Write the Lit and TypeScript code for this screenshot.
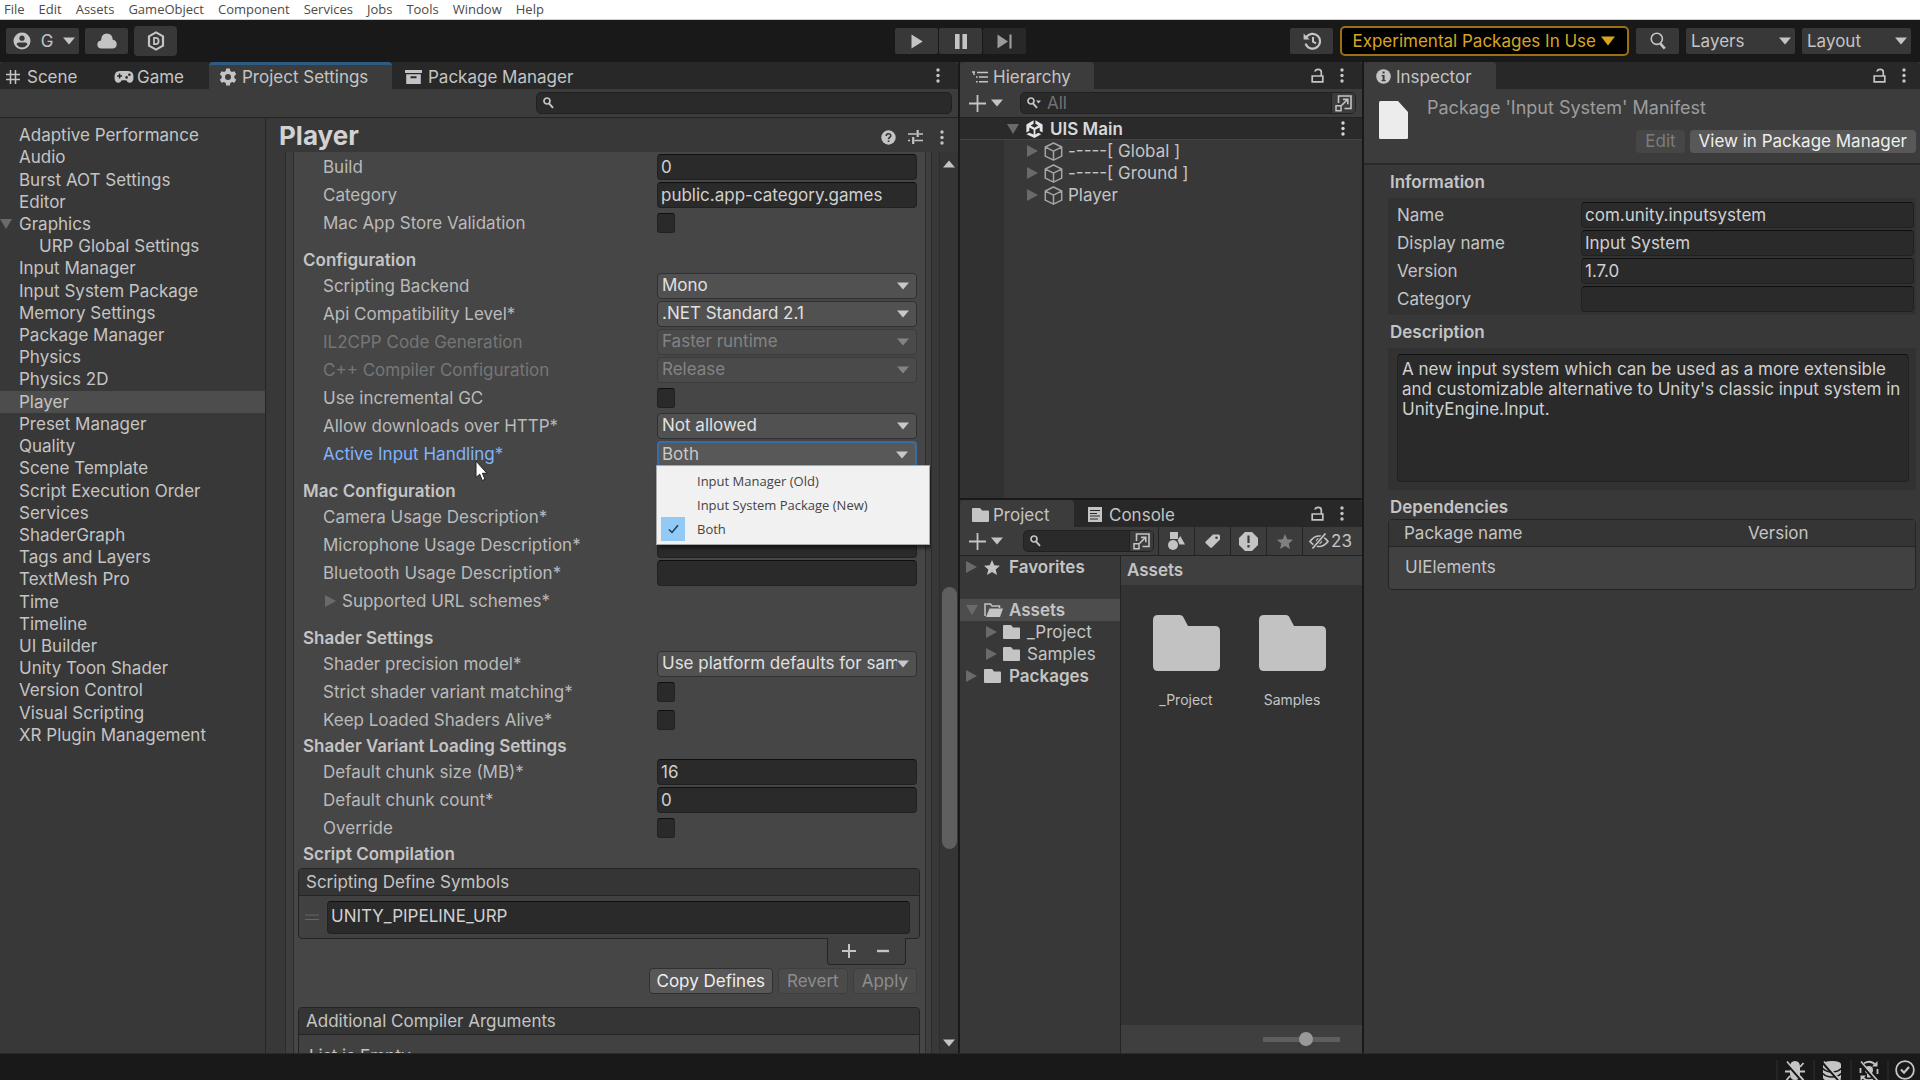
import { LitElement, html, svg, css, nothing, TemplateResult } from "lit";
import { customElement, state } from "lit/decorators.js";
import { classMap } from "lit/directives/class-map.js";

/* ---------- icons ---------- */

const glyphs: Record<string, [number, number, TemplateResult]> = {
  user: [18, 18, svg`<circle cx="9" cy="9" r="8.5" fill="currentColor"/><circle cx="9" cy="6.2" r="2.6" fill="#383838"/><path d="M3.6 12.4Q3.6 10.4 6 10.4h6q2.4 0 2.4 2-2 3-5.4 3t-5.4-3z" fill="#383838"/>`],
  caret: [12, 8, svg`<path d="M0 .5h12L6 7.5z" fill="currentColor"/>`],
  caretUp: [12, 8, svg`<path d="M0 7.5h12L6 .5z" fill="currentColor"/>`],
  caretBig: [14, 10, svg`<path d="M0 .5h14L7 9.5z" fill="currentColor"/>`],
  cloud: [20, 16, svg`<path d="M4.6 15.5Q.5 15.5.3 11.6.3 8 4 7.4 4.3.8 9.800.6q5.400 0 6 6.200Q19.700 7.600 19.700 11.200q-.200 4.300-4.400 4.300z" fill="currentColor"/>`],
  hexd: [18, 20, svg`<path d="M9 1.4l7 3.9v9.4l-7 3.9-7-3.9V5.3z" fill="none" stroke="currentColor" stroke-width="2.2"/><path d="M7 6.800h1.800q2.800 0 2.800 3.200t-2.800 3.200H7z" fill="none" stroke="currentColor" stroke-width="1.8"/>`],
  play: [12, 15, svg`<path d="M.5.5l11.200 7-11.200 7z" fill="currentColor"/>`],
  pause: [12, 15, svg`<path d="M0 0h4.600v15H0zM7.400 0H12v15H7.400z" fill="currentColor"/>`],
  step: [15, 15, svg`<path d="M.5.5l10.500 7-10.500 7zM12.400.5h2.200v14h-2.200z" fill="currentColor"/>`],
  history: [20, 18, svg`<path d="M4.400 5.200A7.400 7.400 0 1 1 3.600 11.600" fill="none" stroke="currentColor" stroke-width="2.2"/><path d="M1.600 1.600v6h6z" fill="currentColor"/><path d="M11 5v4.600l3 1.800" fill="none" stroke="currentColor" stroke-width="2"/>`],
  find: [16, 18, svg`<circle cx="6.8" cy="6.8" r="5.6" fill="none" stroke="currentColor" stroke-width="1.6"/><path d="M10.400 11.600l4.400 5" stroke="currentColor" stroke-width="2.6"/>`],
  grid: [14, 14, svg`<path d="M4.500 0v14M9.500 0v14M0 4.500h14M0 9.500h14" stroke="currentColor" stroke-width="1.5"/>`],
  pad: [20, 14, svg`<path d="M5.800 1h8.400q5.300 0 5.300 6 0 5.800-4 5.800-1.700 0-3.300-2.600H7.800q-1.600 2.600-3.300 2.600Q.5 12.800.5 7q0-6 5.300-6z" fill="currentColor"/><path d="M5.600 3.600v5M3.100 6.100h5" stroke="#282828" stroke-width="1.5"/><circle cx="12.6" cy="7.4" r="1.3" fill="#282828"/><circle cx="15.4" cy="4.8" r="1.3" fill="#282828"/>`],
  gear: [18, 18, svg`<path d="M7.200.6h3.600l.5 2.500 1.700 1 2.400-.9 1.800 3.100-1.900 1.700v2l1.900 1.700-1.800 3.100-2.400-.9-1.700 1-.5 2.500H7.200l-.5-2.500-1.700-1-2.400.9L.8 11.700 2.700 10V8L.8 6.300l1.800-3.100 2.400.9 1.700-1z" fill="currentColor"/><circle cx="9" cy="9" r="3" fill="#3c3c3c"/>`],
  box: [17, 14, svg`<path d="M0 0h17v3H0z" fill="currentColor"/><path d="M1.200 4.200h14.600V14H1.200z" fill="currentColor"/><path d="M5.500 6.200h6v2h-6z" fill="#282828"/>`],
  kebab: [4, 15, svg`<circle cx="2" cy="2" r="1.7" fill="currentColor"/><circle cx="2" cy="7.5" r="1.7" fill="currentColor"/><circle cx="2" cy="13" r="1.7" fill="currentColor"/>`],
  lens: [11, 12, svg`<circle cx="4" cy="4" r="3" fill="none" stroke="currentColor" stroke-width="1.7"/><path d="M6 6.400l4 4.400" stroke="currentColor" stroke-width="2"/>`],
  lensMenu: [14, 12, svg`<circle cx="4" cy="4" r="3" fill="none" stroke="currentColor" stroke-width="1.7"/><path d="M6 6.400l4 4.400" stroke="currentColor" stroke-width="2"/><path d="M9 3.500h5l-2.500 3z" fill="currentColor"/>`],
  help: [15, 15, svg`<circle cx="7.5" cy="7.5" r="7.2" fill="currentColor"/><path d="M5.200 6q0-2.300 2.300-2.300T9.800 5.800q0 1-1.200 1.700Q7.500 8.200 7.500 9.200" fill="none" stroke="#383838" stroke-width="1.6"/><path d="M6.700 10.400h1.700V12H6.700z" fill="#383838"/>`],
  sliders: [15, 14, svg`<path d="M0 4h8.500M11 4h4M6.500 10.500H15M0 10.500h2" stroke="currentColor" stroke-width="1.6"/><path d="M9.700 0v7M5.200 7v7" stroke="currentColor" stroke-width="2.2"/>`],
  tree: [16, 12, svg`<path d="M0 1h3M5 1.500h11M7 6h9M7 10.800h9M4 6h1.600M4 10.800h1.600M2 1v3" stroke="currentColor" stroke-width="1.5"/>`],
  lock: [13, 15, svg`<path d="M1.200 8h10.600v5.800H1.200z" fill="none" stroke="currentColor" stroke-width="1.7"/><path d="M10.300 8V4.200Q10.300 1.400 7.200 1.400T4.200 3.600" fill="none" stroke="currentColor" stroke-width="1.7"/>`],
  plus: [17, 17, svg`<path d="M8.500 0v17M0 8.500h17" stroke="currentColor" stroke-width="1.8"/>`],
  picker: [17, 17, svg`<path d="M3.500 8V1h12.500v12.500H9.500" fill="none" stroke="currentColor" stroke-width="1.6"/><path d="M1 10.800h5V15.800H1z" fill="none" stroke="currentColor" stroke-width="1.5"/><path d="M6.500 10.500L12 5M8 4.400h4.800v4.800" fill="none" stroke="currentColor" stroke-width="1.6"/>`],
  unity: [17, 18, svg`<path d="M7.600.3v3.500L4.700 5.500l3.800 2.200 3.800-2.200-2.900-1.700V.3l7.200 4.100v8.200l-2.900-1.700V7.400L9.400 9.800v4.600l2.900-1.700 2.900 1.600L8.500 17.900.400 14.300l2.900-1.600 4.300 1.700V9.800L3.300 7.400v3.500L.4 12.600V4.400z" fill="#e6e6e6"/>`],
  cube: [19, 19, svg`<path d="M9.500 1l8.200 4v9.200L9.500 18.200 1.300 14.200V5z M1.500 5.200l8 4 8-4M9.500 9.200v9" fill="none" stroke="currentColor" stroke-width="1.5" stroke-linejoin="round"/>`],
  triDown: [12, 10, svg`<path d="M0 0h12L6 10z" fill="currentColor"/>`],
  triRight: [11, 12, svg`<path d="M0 0l11 6L0 12z" fill="currentColor"/>`],
  info: [15, 15, svg`<circle cx="7.5" cy="7.5" r="7.3" fill="currentColor"/><path d="M6.600 2.600h2v2h-2zM5.600 6h3v5h1v1.200H5.600V11h1V7.200h-1z" fill="#3c3c3c"/>`],
  doc: [29, 38, svg`<path d="M1.500 0H19l10 11v25.500q0 1.500-1.500 1.500h-26Q0 38 0 36.500v-35Q0 0 1.500 0z" fill="#ececec"/>`],
  folder: [17, 14, svg`<path d="M1 0h6.500q.7 0 1.100.6L10 2.600h6q1 0 1 1V13q0 1-1 1H1q-1 0-1-1V1q0-1 1-1z" fill="currentColor"/>`],
  folderOpen: [19, 14, svg`<path d="M1 13V1h5.500L8 3h7.500v2" fill="none" stroke="currentColor" stroke-width="1.5"/><path d="M5.500 5.500H19L16 14H2z" fill="currentColor"/>`],
  bigFolder: [67, 56, svg`<path d="M5 0h22q2 0 3 1.600L35 11h27q5 0 5 5v35q0 5-5 5H5q-5 0-5-5V5q0-5 5-5z" fill="#c2c2c2"/>`],
  console: [14, 15, svg`<path d="M0 0h14v15H0z" fill="currentColor"/><path d="M2 3.500h10M2 6.500h7M2 9h10M2 12h8" stroke="#282828" stroke-width="1.2"/>`],
  star: [16, 15, svg`<path d="M8 0l2.300 5.300 5.700.5-4.300 3.700L13 15l-5-3-5 3 1.300-5.500L0 5.800l5.700-.5z" fill="currentColor"/>`],
  shapes: [17, 18, svg`<path d="M2 0h8v7H2z" fill="currentColor"/><circle cx="5" cy="13" r="5" fill="currentColor"/><path d="M12.300 4L17 12.500h-5.500L9.600 8z" fill="currentColor"/>`],
  tag: [15, 14, svg`<path d="M8 .5h5.500Q15 .5 15 2v3.500L7 13.500q-1 .8-1.800 0L.7 9.300q-.8-1 0-1.800z" fill="currentColor"/><circle cx="11.5" cy="3.7" r="1.3" fill="#3c3c3c"/>`],
  alert: [19, 19, svg`<path d="M6 0h7l6 6v7l-6 6H6l-6-6V6z" fill="currentColor"/><path d="M9.500 3.500v7.500M9.500 13v2.500" stroke="#3c3c3c" stroke-width="2.2"/>`],
  eyeOff: [20, 16, svg`<path d="M1 8.500Q5 3 10 3t9 5.500Q15 13.500 10 13.500T1 8.500z" fill="none" stroke="currentColor" stroke-width="1.7"/><circle cx="10" cy="8" r="3" fill="currentColor"/><path d="M3.500 15.500L16.500.5" stroke="#3c3c3c" stroke-width="3.6"/><path d="M3.500 15.500L16.500.5" stroke="currentColor" stroke-width="1.7"/>`],
  handle: [14, 7, svg`<path d="M0 1h14M0 5.500h14" stroke="currentColor" stroke-width="1"/>`],
  add: [14, 14, svg`<path d="M7 0v14M0 7h14" stroke="currentColor" stroke-width="2"/>`],
  minus: [12, 14, svg`<path d="M0 7h12" stroke="currentColor" stroke-width="2.4"/>`],
  check: [11, 10, svg`<path d="M1 5.500l3 3L10 1.200" fill="none" stroke="#1b3a55" stroke-width="1.5"/>`],
  pointer: [13, 22, svg`<path d="M1 1v16.500l3.700-3.300 2.600 6.300 2.700-1.200-2.600-6h4.600z" fill="#fff" stroke="#222" stroke-width="1"/>`],
  bug: [20, 22, svg`<path d="M5 7q0-6 5-6t5 6v7q0 6-5 6t-5-6z" fill="currentColor"/><path d="M5 7L1.500 3M15 7l3.500-4M5 11.500H0M15 11.500h5M5 16l-3.500 4M15 16l3.500 4" stroke="currentColor" stroke-width="1.8"/><path d="M.5 2.500L17 21" stroke="#191919" stroke-width="2.4"/><path d="M2 1.500L18.500 20.500" stroke="currentColor" stroke-width="1.6"/>`],
  disks: [20, 22, svg`<path d="M1 4.500Q1 1 10 1t9 3.500v13Q19 21 10 21T1 17.500z" fill="currentColor"/><path d="M1 8.500q3 3.500 9 3.500t9-3.500M1 13.500q3 3.500 9 3.500t9-3.500" fill="none" stroke="#191919" stroke-width="1.6"/><path d="M.5 2.500L17 21" stroke="#191919" stroke-width="2.4"/><path d="M2 1.500L18.500 20.500" stroke="currentColor" stroke-width="1.6"/>`],
  syncOff: [20, 22, svg`<path d="M5 3.200Q12-.5 16.500 5M18.500 9v5M15 18.800Q8 22.500 3.500 17M1.500 13V8" fill="none" stroke="currentColor" stroke-width="1.8"/><path d="M18.500 1v5.500H13zM1.500 21v-5.500H7z" fill="currentColor"/><circle cx="10" cy="10" r="4" fill="currentColor"/><path d="M8 14h4v3.500H8z" fill="currentColor"/><path d="M.5 2.500L17 21" stroke="#191919" stroke-width="2.4"/><path d="M2 1.500L18.500 20.500" stroke="currentColor" stroke-width="1.6"/>`],
  okRing: [20, 20, svg`<circle cx="10" cy="10" r="8.9" fill="none" stroke="currentColor" stroke-width="1.8"/><path d="M6 9.500l3 3.200L14 7" fill="none" stroke="currentColor" stroke-width="2.2"/>`],
};

const icon = (name: string) => {
  const [w, h, body] = glyphs[name];
  return html`<svg class="icon" width=${w} height=${h} viewBox="0 0 ${w} ${h}" aria-hidden="true">${body}</svg>`;
};

/* ---------- shared styles ---------- */

const base = css`
  :host {
    display: block;
    min-width: 0;
    min-height: 0;
    font: 400 17px/22px Inter, "Liberation Sans", sans-serif;
    color: #c4c4c4;
  }
  *, *::before, *::after { box-sizing: border-box; }
  button, input, select, textarea {
    font: inherit;
    color: inherit;
    margin: 0;
    padding: 0;
    border: 0;
    background: none;
    outline: none;
    min-width: 0;
  }
  button { display: flex; align-items: center; text-align: left; white-space: nowrap; }
  ul { list-style: none; margin: 0; padding: 0; }
  h1, h2, h3, p { margin: 0; }
  .icon { display: block; flex: none; }
  .window { display: flex; flex-direction: column; height: 100%; background: #383838; overflow: hidden; }
  .tabs { display: flex; height: 27px; flex: none; background: #282828; border-radius: 4px 4px 0 0; overflow: hidden; }
  .tab { gap: 6px; padding: 2px 0 0 12px; height: 27px; }
  .tab.active { background: #3c3c3c; border-radius: 4px 4px 0 0; }
  .tabs .tools { display: flex; align-items: center; gap: 16px; margin-left: auto; padding-right: 18px; }
  .bar { display: flex; align-items: center; height: 29px; flex: none; background: #3c3c3c; border-bottom: 1px solid #232323; }
  .search { display: flex; align-items: center; height: 22px; background: #2a2a2a; border: 1px solid #212121; border-radius: 5px; overflow: hidden; }
  .search .icon { margin-left: 6px; }
  .search input { flex: 1; width: 0; padding-left: 6px; height: 20px; }
  .search input::placeholder { color: #727272; opacity: 1; }
  .search button { height: 20px; padding-right: 3px; background: #3c3c3c; border-left: 1px solid #212121; }
  .search button .icon { margin-left: 3px; }
  .dim { color: #6a6a6a; }
  .field {
    width: 100%;
    height: 26px;
    padding: 0 3px;
    background: #2a2a2a;
    border: 1px solid #212121;
    border-top-color: #0f0f0f;
    border-radius: 4px;
    color: #d0d0d0;
  }
`;

/* ---------- top toolbar ---------- */

@customElement("editor-toolbar")
export class EditorToolbar extends LitElement {
  static styles = [base, css`
    .menu { display: flex; gap: 14px; height: 20px; padding-left: 4px; background: #fff; border-bottom: 1px solid #cfcfcf; }
    .menu button { font: 400 13px/18px "Open Sans", "Noto Sans CJK KR", sans-serif; color: #4a4a4a; height: 18px; }
    .strip { display: grid; grid-template-columns: 1fr auto 1fr; align-items: center; height: 42px; background: #191919; padding: 0 9px 0 6px; }
    .group { display: flex; align-items: center; gap: 6px; }
    .group.right { justify-content: flex-end; gap: 7px; }
    .key { display: flex; align-items: center; justify-content: center; height: 26px; width: 43px; background: #383838; border-radius: 2px; }
    .key.account { width: 73px; gap: 10px; padding-left: 3px; }
    .key.tall { height: 30px; border-radius: 4px; }
    .transport { display: flex; gap: 1px; padding-left: 4px; }
    .key.off { background: #282828; color: #9a9a9a; }
    .warn { height: 30px; padding: 0 12px 0 10px; gap: 5px; background: #000; border: 2px solid #9a7112; border-radius: 5px; color: #d8a520; }
    .pick { display: grid; align-items: center; width: 109px; height: 26px; background: #383838; border-radius: 2px; }
    .pick select { grid-area: 1 / 1; appearance: none; width: 100%; padding-left: 5px; }
    .pick .icon { grid-area: 1 / 1; justify-self: end; margin-right: 4px; pointer-events: none; }
  `];

  render() {
    const menus = ["File", "Edit", "Assets", "GameObject", "Component", "Services", "Jobs", "Tools", "Window", "Help"];
    return html`
      <nav class="menu">${menus.map((m) => html`<button>${m}</button>`)}</nav>
      <div class="strip">
        <div class="group">
          <button class="key account" aria-label="Account">${icon("user")}<span>G</span>${icon("caret")}</button>
          <button class="key" aria-label="Cloud">${icon("cloud")}</button>
          <button class="key tall" aria-label="DevOps">${icon("hexd")}</button>
        </div>
        <div class="transport">
          <button class="key" aria-label="Play">${icon("play")}</button>
          <button class="key" aria-label="Pause">${icon("pause")}</button>
          <button class="key off" aria-label="Step">${icon("step")}</button>
        </div>
        <div class="group right">
          <button class="key" aria-label="Undo history">${icon("history")}</button>
          <button class="warn">Experimental Packages In Use ${icon("caretBig")}</button>
          <button class="key" aria-label="Search">${icon("find")}</button>
          <div class="pick"><select aria-label="Layers"><option>Layers</option></select>${icon("caret")}</div>
          <div class="pick"><select aria-label="Layout"><option>Layout</option></select>${icon("caret")}</div>
        </div>
      </div>`;
  }
}

/* ---------- project settings ---------- */

type Row = { label: string; text?: string; pick?: string; tick?: boolean; off?: boolean; open?: boolean; fold?: boolean };
type Section = { title?: string; tight?: boolean; rows: Row[] };

const sections: Section[] = [
  { rows: [
    { label: "Build", text: "0" },
    { label: "Category", text: "public.app-category.games" },
    { label: "Mac App Store Validation", tick: true },
  ] },
  { title: "Configuration", rows: [
    { label: "Scripting Backend", pick: "Mono" },
    { label: "Api Compatibility Level*", pick: ".NET Standard 2.1" },
    { label: "IL2CPP Code Generation", pick: "Faster runtime", off: true },
    { label: "C++ Compiler Configuration", pick: "Release", off: true },
    { label: "Use incremental GC", tick: true },
    { label: "Allow downloads over HTTP*", pick: "Not allowed" },
    { label: "Active Input Handling*", pick: "Both", open: true },
  ] },
  { title: "Mac Configuration", rows: [
    { label: "Camera Usage Description*", text: "" },
    { label: "Microphone Usage Description*", text: "" },
    { label: "Bluetooth Usage Description*", text: "" },
    { label: "Supported URL schemes*", fold: true },
  ] },
  { title: "Shader Settings", rows: [
    { label: "Shader precision model*", pick: "Use platform defaults for sampler precision" },
    { label: "Strict shader variant matching*", tick: true },
    { label: "Keep Loaded Shaders Alive*", tick: true },
  ] },
  { title: "Shader Variant Loading Settings", tight: true, rows: [
    { label: "Default chunk size (MB)*", text: "16" },
    { label: "Default chunk count*", text: "0" },
    { label: "Override", tick: true },
  ] },
  { title: "Script Compilation", tight: true, rows: [] },
];

const categories = ["Adaptive Performance", "Audio", "Burst AOT Settings", "Editor", "Graphics", "URP Global Settings",
  "Input Manager", "Input System Package", "Memory Settings", "Package Manager", "Physics", "Physics 2D", "Player",
  "Preset Manager", "Quality", "Scene Template", "Script Execution Order", "Services", "ShaderGraph", "Tags and Layers",
  "TextMesh Pro", "Time", "Timeline", "UI Builder", "Unity Toon Shader", "Version Control", "Visual Scripting",
  "XR Plugin Management"];

@customElement("settings-window")
export class SettingsWindow extends LitElement {
  @state() private current = "Player";

  static styles = [base, css`
    .tab { padding-left: 6px; }
    .tab.scene { width: 108px; gap: 7px; }
    .tab.game { width: 101px; gap: 3px; }
    .tab.active { width: 183px; padding-left: 10px; gap: 5px; border-top: 3px solid #2c5d87; padding-top: 0; }
    .tab.pkg { padding-left: 13px; }
    .bar { justify-content: flex-end; padding-right: 6px; }
    .bar .search { width: 416px; }
    .split { display: grid; grid-template-columns: 266px 1fr; flex: 1; min-height: 0; }
    .side { border-right: 1px solid #262626; padding-top: 6px; }
    .side ul { display: grid; grid-auto-rows: 1fr; min-height: 622px; }
    .side button { width: 100%; height: 100%; padding-left: 19px; }
    .side button.child { padding-left: 39px; }
    .side button.parent { padding-left: 0; gap: 7px; }
    .side button.on { background: #4d4d4d; }
    .side .icon { color: #6a6a6a; }
    .page { display: flex; flex-direction: column; min-height: 0; min-width: 0; }
    .title { display: flex; align-items: center; gap: 12px; height: 34px; flex: none; padding: 1px 14px 0 13px; }
    .title h1 { font-size: 26px; line-height: 30px; font-weight: 700; margin-right: auto; color: #d2d2d2; }
    .title button { padding-top: 3px; }
    .title button:last-child { margin-left: 5px; }
    .scroll { display: grid; grid-template-columns: 1fr 19px; flex: 1; min-height: 0; overflow: hidden; }
    .frame { margin-left: 19px; margin-right: 7px; padding: 0 5px 0 7px; border: solid #2c2c2c; border-width: 0 1px; background: #3f3f3f; min-height: 0; overflow: clip; }
    .form { background: #464646; border: solid #2c2c2c; border-width: 0 1px; padding: 1px 5px 0 4px; min-height: 100%; }
    .form h2 { font-size: 17px; line-height: 23px; font-weight: 600; padding-left: 5px; margin-top: 12px; }
    .form h2.tight { line-height: 24px; margin-top: 0; }
    .row { display: grid; grid-template-columns: 334px 260px; align-items: center; height: 28px; padding-left: 25px; position: relative; color: #bababa; }
    .row.off { color: #767676; }
    .row.open > label { color: #81b4ff; }
    .fold { gap: 6px; }
    .fold .icon { color: #6a6a6a; margin-left: 2px; }
    .pick { display: grid; align-items: center; height: 26px; background: #515151; border: 1px solid #303030; border-radius: 4px; color: #e0e0e0; }
    .pick select { grid-area: 1 / 1; appearance: none; width: 100%; padding: 0 19px 2px 4px; opacity: 1; }
    .pick .icon { grid-area: 1 / 1; justify-self: end; margin-right: 7px; pointer-events: none; color: #c8c8c8; }
    .row.off .pick { background: #4a4a4a; border-color: #3c3c3c; color: #838383; }
    .row.off .pick .icon { color: #838383; }
    .row.open .pick { border: 2px solid #3a6ba8; background: #585858; color: #c8c8c8; }
    .row.open .pick select { padding-left: 3px; }
    .tick { appearance: none; width: 18px; height: 20px; background: #2a2a2a; border: 1px solid #212121; border-top-color: #0f0f0f; border-radius: 3px; }
    .list { border: 1px solid #242424; border-radius: 4px; background: #414141; margin-top: 2px; }
    .list h3 { font-size: 17px; font-weight: 400; line-height: 26px; padding-left: 7px; background: #353535; border-bottom: 1px solid #242424; border-radius: 3px 3px 0 0; }
    .entry { display: flex; align-items: center; gap: 8px; padding: 5px 9px 4px 6px; color: #666; }
    .entry .field { height: 33px; padding-bottom: 4px; }
    .foot { display: flex; justify-content: center; gap: 21px; align-items: center; width: 79px; height: 27px; margin-left: auto; margin-right: 14px; margin-top: -1px; background: #414141; border: 1px solid #242424; border-top: 0; border-radius: 0 0 4px 4px; position: relative; padding-right: 2px; }
    .actions { display: flex; justify-content: flex-end; gap: 5px; padding: 3px 3px 11px 0; }
    .actions button { height: 26px; padding: 0 7px; background: #585858; border: 1px solid #303030; border-radius: 4px; color: #eee; }
    .actions button[disabled] { background: #4b4b4b; border-color: #3e3e3e; color: #8d8d8d; padding: 0 8px; }
    .empty { line-height: 24px; padding: 9px 0 0 10px; }
    .popup { position: absolute; z-index: 2; left: 358px; top: 25px; width: 274px; padding: 3px 4px; background: #f1f1f1; border: 1px solid #a8a8a8; box-shadow: 3px 3px 4px #0008; }
    .popup button { display: grid; grid-template-columns: 24px auto; gap: 12px; width: 100%; height: 24px; font: 400 13px/22px "Open Sans", "Noto Sans CJK KR", sans-serif; color: #444; }
    .popup .mark { height: 24px; display: grid; place-items: center; }
    .popup .mark.on { background: #91c9f7; }
    .cursor { position: absolute; left: 177px; top: 20px; }
    .rail { display: flex; flex-direction: column; align-items: center; background: #353535; border-left: 1px solid #2c2c2c; padding: 8px 0 6px; min-height: 0; }
    .track { display: grid; grid-template-rows: 419fr 262fr 190fr; flex: 1; width: 15px; }
    .thumb { grid-row: 2; background: #5f5f5f; border-radius: 8px; }
  `];

  private control(r: Row, id: string) {
    if (r.pick !== undefined)
      return html`<div class="pick"><select id=${id} ?disabled=${r.off}><option>${r.pick}</option></select>${icon("caret")}</div>`;
    if (r.tick) return html`<input id=${id} class="tick" type="checkbox" />`;
    if (r.text !== undefined) return html`<input id=${id} class="field" type="text" .value=${r.text} />`;
    return nothing;
  }

  private row(r: Row) {
    const id = r.label.toLowerCase().replace(/[^a-z0-9]+/g, "-");
    return html`<div class=${classMap({ row: true, off: !!r.off, open: !!r.open })}>
      ${r.fold ? html`<button class="fold">${icon("triRight")}${r.label}</button>` : html`<label for=${id}>${r.label}</label>`}
      ${this.control(r, id)}
      ${r.open ? html`
        <div class="popup" role="listbox" aria-label="Active Input Handling">
          ${["Input Manager (Old)", "Input System Package (New)", "Both"].map((o) => html`
            <button role="option" aria-selected=${o === "Both"}>
              <span class=${classMap({ mark: true, on: o === "Both" })}>${o === "Both" ? icon("check") : nothing}</span>${o}
            </button>`)}
        </div>
        <div class="cursor">${icon("pointer")}</div>` : nothing}
    </div>`;
  }

  render() {
    return html`<section class="window">
      <div class="tabs">
        <button class="tab scene">${icon("grid")}Scene</button>
        <button class="tab game">${icon("pad")}Game</button>
        <button class="tab active">${icon("gear")}Project Settings</button>
        <button class="tab pkg">${icon("box")}Package Manager</button>
        <div class="tools"><button aria-label="Window menu">${icon("kebab")}</button></div>
      </div>
      <div class="bar"><div class="search">${icon("lens")}<input type="search" aria-label="Search settings" /></div></div>
      <div class="split">
        <nav class="side"><ul>
          ${categories.map((c) => html`<li><button
            class=${classMap({ on: c === this.current, child: c === "URP Global Settings", parent: c === "Graphics" })}
            @click=${() => (this.current = c)}>${c === "Graphics" ? icon("triDown") : nothing}${c}</button></li>`)}
        </ul></nav>
        <div class="page">
          <div class="title">
            <h1>${this.current}</h1>
            <button aria-label="Help">${icon("help")}</button>
            <button aria-label="Presets">${icon("sliders")}</button>
            <button aria-label="More">${icon("kebab")}</button>
          </div>
          <div class="scroll">
            <div class="frame"><div class="form">
              ${sections.map((s) => html`
                ${s.title ? html`<h2 class=${classMap({ tight: !!s.tight })}>${s.title}</h2>` : nothing}
                ${s.rows.map((r) => this.row(r))}`)}
              <div class="list">
                <h3>Scripting Define Symbols</h3>
                <div class="entry">${icon("handle")}<input class="field" type="text" aria-label="Define symbol" .value=${"UNITY_PIPELINE_URP"} /></div>
              </div>
              <div class="foot"><button aria-label="Add">${icon("add")}</button><button aria-label="Remove">${icon("minus")}</button></div>
              <div class="actions"><button>Copy Defines</button><button disabled>Revert</button><button disabled>Apply</button></div>
              <div class="list"><h3>Additional Compiler Arguments</h3><p class="empty">List is Empty</p></div>
            </div></div>
            <div class="rail">${icon("caretUp")}<div class="track"><div class="thumb"></div></div>${icon("caret")}</div>
          </div>
        </div>
      </div>
    </section>`;
  }
}

/* ---------- hierarchy ---------- */

@customElement("hierarchy-window")
export class HierarchyWindow extends LitElement {
  static styles = [base, css`
    .tab { width: 134px; padding-left: 12px; gap: 5px; }
    .create { gap: 5px; width: 60px; padding-left: 9px; }
    .bar { padding-right: 6px; }
    .search { flex: 1; }
    .scene { display: flex; align-items: center; gap: 7px; height: 22px; padding: 0 17px 0 47px; background: #2a2a2a; border-bottom: 1px solid #444; font-weight: 600; color: #d8d8d8; }
    .scene .menu { margin-left: auto; }
    .body { display: grid; grid-template-columns: 44px 1fr; flex: 1; }
    .gutter { background: #313131; }
    .body li { display: flex; height: 22px; }
    .body button { padding-left: 23px; gap: 6px; }
    .body .icon + .icon { color: #a5a5a5; margin-right: -1px; }
    .body .icon:first-child { color: #6a6a6a; }
  `];

  render() {
    return html`<section class="window">
      <div class="tabs">
        <button class="tab active">${icon("tree")}Hierarchy</button>
        <div class="tools"><button aria-label="Lock">${icon("lock")}</button><button aria-label="Window menu">${icon("kebab")}</button></div>
      </div>
      <div class="bar">
        <button class="create" aria-label="Create">${icon("plus")}${icon("caret")}</button>
        <div class="search">${icon("lensMenu")}<input type="search" placeholder="All" aria-label="Search hierarchy" /><button aria-label="Open search">${icon("picker")}</button></div>
      </div>
      <div class="scene"><span class="dim">${icon("triDown")}</span>${icon("unity")}UIS Main<button class="menu" aria-label="Scene menu">${icon("kebab")}</button></div>
      <div class="body">
        <div class="gutter"></div>
        <ul>${["-----[ Global ]", "-----[ Ground ]", "Player"].map((n) => html`<li><button>${icon("triRight")}${icon("cube")}${n}</button></li>`)}</ul>
      </div>
    </section>`;
  }
}

/* ---------- project browser ---------- */

@customElement("project-window")
export class ProjectWindow extends LitElement {
  static styles = [base, css`
    .tab { gap: 4px; }
    .tab.active { width: 114px; }
    .tab.console { padding-left: 14px; gap: 7px; }
    .create { gap: 5px; width: 63px; padding-left: 9px; }
    .search { flex: 1; margin-right: 4px; }
    .chip { justify-content: center; width: 36px; height: 28px; border-left: 1px solid #232323; }
    .chip.count { width: 60px; gap: 2px; padding-right: 4px; }
    .chip.faded { color: #808080; }
    .split { display: grid; grid-template-columns: 160px 1fr; flex: 1; min-height: 0; }
    .tree li { display: flex; height: 22px; }
    .tree li.apart { margin-top: 21px; }
    .tree button { width: 100%; padding-left: 6px; gap: 6px; font-weight: 600; }
    .tree .slot { display: flex; width: 19px; flex: none; }
    .tree .arrow { display: flex; width: 12px; flex: none; color: #6a6a6a; }
    .tree .nested button { padding-left: 26px; gap: 5px; font-weight: 400; }
    .tree .on { background: #4d4d4d; }
    .assets { display: flex; flex-direction: column; background: #333; border-left: 1px solid #232323; }
    .assets h2 { font-size: 17px; font-weight: 600; line-height: 29px; padding-left: 6px; background: #3f3f3f; }
    .tiles { display: flex; gap: 24px; padding: 30px 24px; flex: 1; align-items: flex-start; }
    .tiles button { flex-direction: column; gap: 18px; width: 82px; font-size: 14px; }
    .foot { display: flex; align-items: center; justify-content: flex-end; height: 28px; background: #3f3f3f; padding-right: 22px; }
    .foot input { appearance: none; width: 77px; height: 14px; }
    .foot input::-webkit-slider-runnable-track { height: 5px; background: #5e5e5e; }
    .foot input::-webkit-slider-thumb { appearance: none; width: 14px; height: 14px; margin-top: -5px; border-radius: 50%; background: #999; }
  `];

  private node(name: string, glyph: string, arrow = "triRight", cls = "") {
    return html`<li class=${cls}><button><span class="arrow">${icon(arrow)}</span><span class="slot">${icon(glyph)}</span>${name}</button></li>`;
  }

  render() {
    return html`<section class="window">
      <div class="tabs">
        <button class="tab active">${icon("folder")}Project</button>
        <button class="tab console">${icon("console")}Console</button>
        <div class="tools"><button aria-label="Lock">${icon("lock")}</button><button aria-label="Window menu">${icon("kebab")}</button></div>
      </div>
      <div class="bar">
        <button class="create" aria-label="Create">${icon("plus")}${icon("caret")}</button>
        <div class="search">${icon("lens")}<input type="search" aria-label="Search project" /><button aria-label="Open search">${icon("picker")}</button></div>
        <button class="chip" aria-label="Search by type">${icon("shapes")}</button>
        <button class="chip" aria-label="Search by label">${icon("tag")}</button>
        <button class="chip" aria-label="Search by log">${icon("alert")}</button>
        <button class="chip faded" aria-label="Save search">${icon("star")}</button>
        <button class="chip count">${icon("eyeOff")}23</button>
      </div>
      <div class="split">
        <ul class="tree">
          ${this.node("Favorites", "star")}
          ${this.node("Assets", "folderOpen", "triDown", "apart on")}
          ${this.node("_Project", "folder", "triRight", "nested")}
          ${this.node("Samples", "folder", "triRight", "nested")}
          ${this.node("Packages", "folder")}
        </ul>
        <div class="assets">
          <h2>Assets</h2>
          <div class="tiles">${["_Project", "Samples"].map((n) => html`<button>${icon("bigFolder")}${n}</button>`)}</div>
          <div class="foot"><input type="range" min="0" max="100" value="57" aria-label="Icon size" /></div>
        </div>
      </div>
    </section>`;
  }
}

/* ---------- inspector ---------- */

@customElement("inspector-window")
export class InspectorWindow extends LitElement {
  static styles = [base, css`
    .tab { width: 132px; gap: 5px; }
    .tabs .tools { padding-right: 14px; }
    .head { display: grid; grid-template-columns: auto 1fr; gap: 0 19px; height: 76px; padding: 7px 4px 0 15px; background: #3c3c3c; border-bottom: 2px solid #2a2a2a; }
    .head .icon { grid-row: 1 / 3; margin-top: 5px; }
    .head h1 { font-size: 18px; font-weight: 400; line-height: 23px; color: #9c9c9c; }
    .acts { display: flex; justify-content: flex-end; gap: 5px; }
    .acts button { height: 23px; padding: 0 9px; background: #585858; border-radius: 4px; color: #eee; }
    .acts button[disabled] { background: #464646; color: #7c7c7c; }
    .main { padding: 6px 4px 0 24px; }
    h2 { font-size: 17px; line-height: 22px; font-weight: 600; padding-left: 2px; }
    .group { background: #323232; padding: 4px 2px 1px 9px; margin: 5px 0 6px; }
    .row { display: grid; grid-template-columns: 184px 1fr; align-items: center; height: 28px; padding-bottom: 2px; }
    .group.text { padding: 6px 7px 8px 9px; }
    .field.area { display: block; height: 128px; padding: 4px; line-height: 20px; resize: none; overflow: hidden; }
    table { width: 100%; border-collapse: separate; border-spacing: 0; border: 1px solid #242424; border-radius: 4px; background: #414141; margin-top: 1px; }
    th, td { text-align: left; font-weight: 400; padding: 0 0 0 15px; }
    th { height: 27px; background: #353535; border-bottom: 1px solid #242424; }
    td { height: 42px; padding-bottom: 2px; }
    th:first-child, td:first-child { width: 344px; }
    td { padding-left: 16px; }
  `];

  render() {
    const fields = [["Name", "com.unity.inputsystem"], ["Display name", "Input System"], ["Version", "1.7.0"], ["Category", ""]];
    return html`<section class="window">
      <div class="tabs">
        <button class="tab active">${icon("info")}Inspector</button>
        <div class="tools"><button aria-label="Lock">${icon("lock")}</button><button aria-label="Window menu">${icon("kebab")}</button></div>
      </div>
      <header class="head">
        ${icon("doc")}
        <h1>Package 'Input System' Manifest</h1>
        <div class="acts"><button disabled>Edit</button><button>View in Package Manager</button></div>
      </header>
      <div class="main">
        <h2>Information</h2>
        <div class="group">${fields.map(([k, v], i) => html`<div class="row"><label for="f${i}">${k}</label><input class="field" id="f${i}" type="text" .value=${v} /></div>`)}</div>
        <h2 id="desc">Description</h2>
        <div class="group text"><textarea class="field area" aria-labelledby="desc" .value=${"A new input system which can be used as a more extensible and customizable alternative to Unity's classic input system in UnityEngine.Input."}></textarea></div>
        <h2>Dependencies</h2>
        <table>
          <thead><tr><th>Package name</th><th>Version</th></tr></thead>
          <tbody><tr><td>UIElements</td><td></td></tr></tbody>
        </table>
      </div>
    </section>`;
  }
}

/* ---------- root ---------- */

@customElement("app-root")
export class AppRoot extends LitElement {
  static styles = [base, css`
    :host { display: grid; grid-template-rows: auto 1fr auto; height: 100vh; background: #191919; overflow: hidden; }
    .work { display: grid; grid-template-columns: 958fr 402fr 556fr; column-gap: 2px; min-height: 0; }
    .middle { display: grid; grid-template-rows: 436fr 553fr; row-gap: 2px; min-height: 0; }
    .status { display: flex; justify-content: flex-end; height: 27px; padding: 6px 3px 0 0; border-top: 1px solid #2a2a2a; overflow: hidden; }
    .status button { align-items: flex-start; width: 37px; padding-left: 7px; height: 27px; border-left: 2px solid #242424; }
    .status button:last-child { width: 30px; padding-left: 6px; }
  `];

  render() {
    return html`
      <editor-toolbar></editor-toolbar>
      <main class="work">
        <settings-window></settings-window>
        <div class="middle"><hierarchy-window></hierarchy-window><project-window></project-window></div>
        <inspector-window></inspector-window>
      </main>
      <footer class="status">
        <button aria-label="Debugger">${icon("bug")}</button>
        <button aria-label="Cache server">${icon("disks")}</button>
        <button aria-label="Auto refresh">${icon("syncOff")}</button>
        <button aria-label="Progress">${icon("okRing")}</button>
      </footer>`;
  }
}
